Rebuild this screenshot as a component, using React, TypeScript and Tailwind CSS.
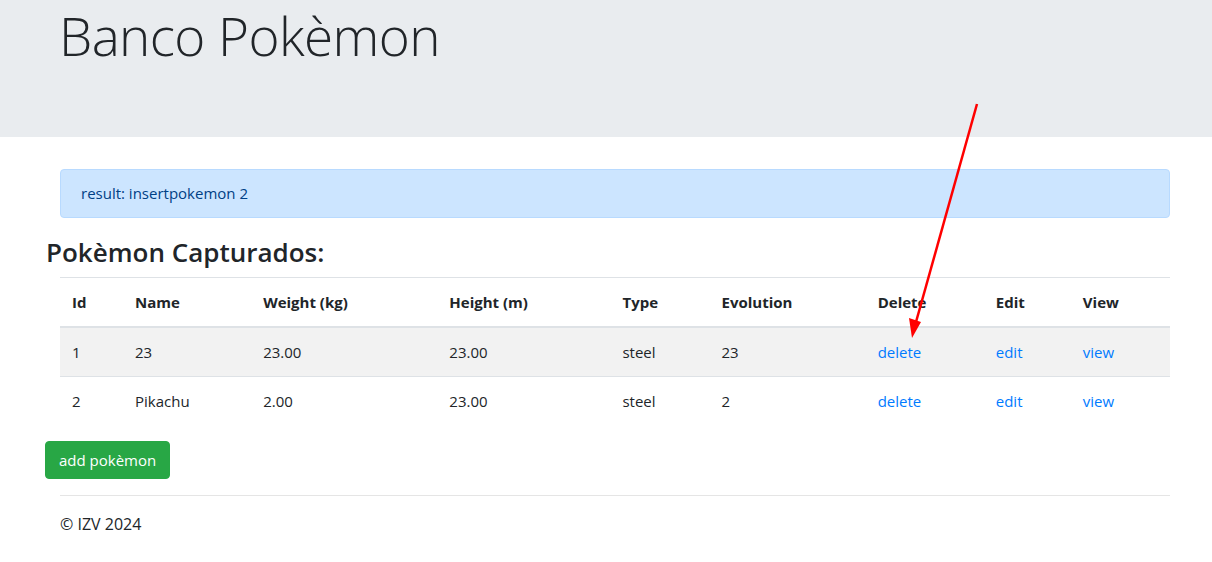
import React from "react";

const cols = [
  { h: "Id", w: 63 },
  { h: "Name", w: 128 },
  { h: "Weight (kg)", w: 186 },
  { h: "Height (m)", w: 173 },
  { h: "Type", w: 99 },
  { h: "Evolution", w: 156 },
  { h: "Delete", w: 118 },
  { h: "Edit", w: 87 },
  { h: "View", w: 99 },
];

const rows = [
  ["1", "23", "23.00", "23.00", "steel", "23"],
  ["2", "Pikachu", "2.00", "23.00", "steel", "2"],
];

export default function App() {
  return (
    <div
      className="relative min-h-[562px] bg-white text-[16px] text-[#212529]"
      style={{ fontFamily: '"Open Sans", "Noto Sans", sans-serif' }}
    >
      <div className="h-[137px] bg-[#e9ecef] pl-[59px] pt-[2px]">
        <h1 className="text-[53px] font-light leading-[68px] tracking-[-0.6px] text-[#212529]">
          Banco Pokèmon
        </h1>
      </div>

      <div className="ml-[60px] mt-[32px] w-[1110px] rounded-[4px] border border-[#b8daff] bg-[#cce5ff] px-[20px] py-[11px] text-[15px] leading-[25px] text-[#004085]">
        result: insertpokemon 2
      </div>

      <h3 className="ml-[46px] mt-[17px] mb-[8px] text-[26px] font-semibold leading-[34px] text-[#212529]">
        Pokèmon Capturados:
      </h3>

      <table className="ml-[60px] w-[1110px] table-fixed border-collapse text-[15px]">
        <colgroup>
          {cols.map((c) => (
            <col key={c.h} style={{ width: c.w }} />
          ))}
        </colgroup>
        <thead>
          <tr className="border-t border-[#dee2e6]">
            {cols.map((c) => (
              <th
                key={c.h}
                className="border-b-2 border-[#dee2e6] px-[12px] py-[12px] text-left font-bold leading-[24px]"
              >
                {c.h}
              </th>
            ))}
          </tr>
        </thead>
        <tbody>
          {rows.map((r, i) => (
            <tr
              key={i}
              className={i === 0 ? "border-b border-[#dee2e6] bg-[#f2f2f2]" : ""}
            >
              {r.map((v, j) => (
                <td key={j} className="px-[12px] py-[12px] leading-[24px]">
                  {v}
                </td>
              ))}
              <td className="px-[12px] py-[12px] leading-[24px] text-[#007bff]">delete</td>
              <td className="px-[12px] py-[12px] leading-[24px] text-[#007bff]">edit</td>
              <td className="px-[12px] py-[12px] leading-[24px] text-[#007bff]">view</td>
            </tr>
          ))}
        </tbody>
      </table>

      <button className="ml-[45px] mt-[16px] rounded-[4px] border border-[#28a745] bg-[#28a745] px-[13px] py-[6px] text-[15px] leading-[24px] text-white">
        add pokèmon
      </button>

      <div className="ml-[60px] mt-[16px] w-[1110px] border-t border-[#e5e5e5] pt-[16px] text-[16px] leading-[24px]">
        © IZV 2024
      </div>

      <svg
        className="pointer-events-none absolute left-0 top-0"
        width="1212"
        height="562"
      >
        <line x1="977" y1="104" x2="916" y2="322" stroke="#ff0000" strokeWidth="2.5" />
        <polygon points="912,338 909,318 921,322" fill="#ff0000" />
      </svg>
    </div>
  );
}
